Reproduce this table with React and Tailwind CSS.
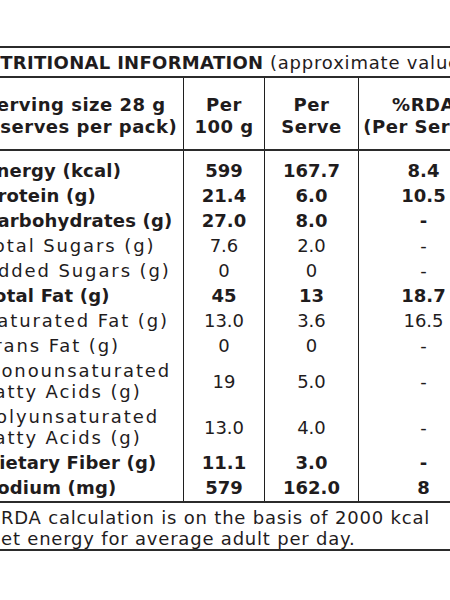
import React from "react";

const rows = [
  { label: ["Energy (kcal)"], v: ["599", "167.7", "8.4"], bold: true },
  { label: ["Protein (g)"], v: ["21.4", "6.0", "10.5"], bold: true },
  { label: ["Carbohydrates (g)"], v: ["27.0", "8.0", "-"], bold: true },
  { label: ["Total Sugars (g)"], v: ["7.6", "2.0", "-"] },
  { label: ["Added Sugars (g)"], v: ["0", "0", "-"] },
  { label: ["Total Fat (g)"], v: ["45", "13", "18.7"], bold: true },
  { label: ["Saturated Fat (g)"], v: ["13.0", "3.6", "16.5"] },
  { label: ["Trans Fat (g)"], v: ["0", "0", "-"] },
  { label: ["Monounsaturated", "Fatty Acids (g)"], v: ["19", "5.0", "-"] },
  { label: ["Polyunsaturated", "Fatty Acids (g)"], v: ["13.0", "4.0", "-"] },
  { label: ["Dietary Fiber (g)"], v: ["11.1", "3.0", "-"], bold: true },
  { label: ["Sodium (mg)"], v: ["579", "162.0", "8"], bold: true },
];

const cols = "grid grid-cols-[213px_81px_94px_130px]";
const cell = "border-l border-[#1f1f1f] flex items-center justify-center";

const Row = ({ row }) => {
  const tall = row.label.length > 1;
  return (
    <div className={`${cols} ${tall ? "h-[46px] leading-[21px]" : "h-[25px] leading-[25px]"} ${row.bold ? "font-bold" : "font-normal"}`}>
      <div className={`pl-[14px] flex flex-col justify-center whitespace-nowrap ${row.bold ? "tracking-[0.2px]" : "tracking-[1.9px]"}`}>
        {row.label.map((l) => (
          <span key={l}>{l}</span>
        ))}
      </div>
      {row.v.map((v, i) => (
        <div key={i} className={cell}>
          {v}
        </div>
      ))}
    </div>
  );
};

const Spacer = ({ h }) => (
  <div className={`${cols} ${h}`}>
    <div />
    <div className={cell} />
    <div className={cell} />
    <div className={cell} />
  </div>
);

export default function App() {
  return (
    <div className="w-[450px] h-[600px] overflow-hidden bg-white text-[#1f1c1d] text-[18px] font-['DejaVu_Sans',sans-serif]">
      <div className="w-[518px] -ml-[30px] pt-[46px]">
        {/* title */}
        <div className="h-[32px] border-y-2 border-[#2b2b2b] flex items-center whitespace-nowrap">
          <span className="font-bold tracking-[0.3px]">NUTRITIONAL INFORMATION</span>
          <span className="tracking-[0.8px]">&nbsp;(approximate values)</span>
        </div>

        {/* header */}
        <div className={`${cols} h-[73px] border-b-2 border-[#2b2b2b] font-bold leading-[22px] tracking-[0.5px]`}>
          <div className="pt-[5px] pr-[4px] flex flex-col items-center justify-center whitespace-nowrap">
            <span>Serving size 28 g</span>
            <span>(5 serves per pack)</span>
          </div>
          <div className={`${cell} pt-[5px] flex-col`}>
            <span>Per</span>
            <span>100 g</span>
          </div>
          <div className={`${cell} pt-[5px] flex-col`}>
            <span>Per</span>
            <span>Serve</span>
          </div>
          <div className={`${cell} pt-[5px] flex-col whitespace-nowrap`}>
            <span>%RDA</span>
            <span>(Per Serve)</span>
          </div>
        </div>

        {/* body */}
        <div className="border-b-2 border-[#2b2b2b]">
          <Spacer h="h-[7px]" />
          {rows.map((r) => (
            <Row key={r.label.join(" ")} row={r} />
          ))}
          <Spacer h="h-[1px]" />
        </div>

        {/* footnote */}
        <div className="h-[48px] border-b-2 border-[#2b2b2b] pt-1 pl-[13px] flex flex-col justify-center leading-[21px] tracking-[0.8px] whitespace-nowrap">
          <span>%RDA calculation is on the basis of 2000 kcal</span>
          <span>diet energy for average adult per day.</span>
        </div>
      </div>
    </div>
  );
}
